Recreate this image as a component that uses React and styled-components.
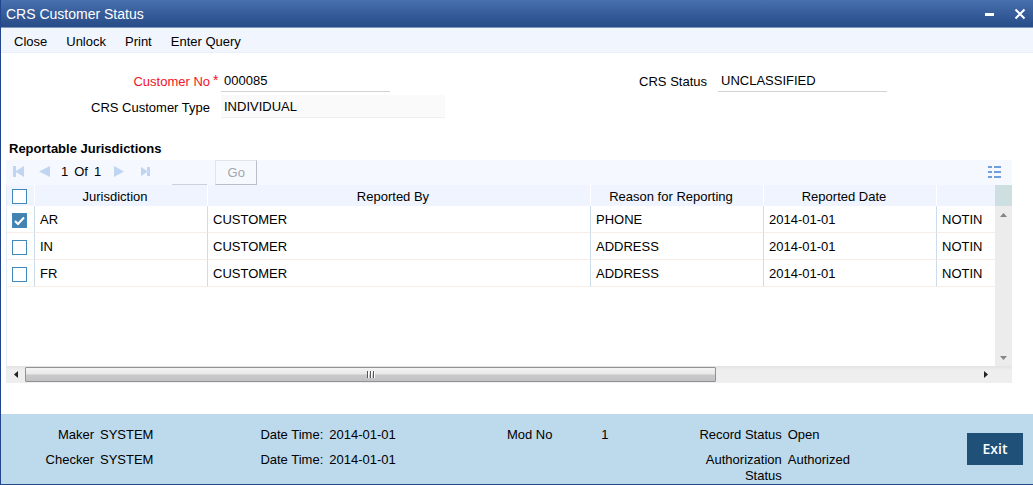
import React, { useState } from 'react';
import styled, { createGlobalStyle } from 'styled-components';

const GlobalStyle = createGlobalStyle`
    * {
        box-sizing: border-box;
    }

    body {
        margin: 0;
        background: #fff;
    }

    body, button, input {
        font-family: "Liberation Sans", Arial, sans-serif;
        font-size: 13px;
        line-height: 16px;
        color: #000;
    }
`;

const Window = styled.div`
    display: flex;
    flex-direction: column;
    min-height: 100vh;
    border-left: 1px solid #21448c;
    border-bottom: 1px solid #24488a;
`;

const TitleBar = styled.header`
    display: flex;
    align-items: center;
    justify-content: space-between;
    height: 28px;
    padding: 0 6px 0 5px;
    background: linear-gradient(#4870ae, #264b87);
    border-bottom: 1px solid #7c9ac0;
    color: #fff;
`;

const Title = styled.h1`
    margin: 0;
    font-size: 14px;
    font-weight: normal;
`;

const WindowButtons = styled.div`
    display: flex;
    gap: 16px;
`;

const IconButton = styled.button`
    display: flex;
    padding: 0;
    border: 0;
    background: none;
    color: inherit;
`;

const Menu = styled.nav`
    display: flex;
    align-items: center;
    gap: 19px;
    height: 25px;
    padding: 4px 13px 0;
    background: #f0f5fe;
    border-bottom: 1px solid #eaeff5;
`;

const MenuButton = styled.button`
    padding: 0;
    border: 0;
    background: none;
`;

const Main = styled.main`
    display: flex;
    flex-direction: column;
    flex: 1;
    padding-top: 16px;
`;

const Form = styled.form`
    display: grid;
    grid-template-columns: 1fr 1fr;
    row-gap: 3px;
    padding-right: 38px;
`;

const FormRow = styled.div`
    display: flex;
    align-items: center;
`;

const Label = styled.label`
    width: 209px;
    padding-top: 3px;
    text-align: right;
    color: ${props => props.$required ? '#f01428' : '#000'};
`;

const Mark = styled.span`
    width: 11px;
    padding: 0 0 2px 3px;
    color: #f01428;
    font-size: 14px;
`;

const TextInput = styled.input`
    width: ${props => props.$wide ? '224px' : '169px'};
    height: 23px;
    padding: 0 3px;
    border: 0;
    border-bottom: 1px solid ${props => props.$wide ? '#efefef' : '#d2d2d2'};
    background: ${props => props.$wide ? '#fafafa' : '#fff'};
    outline: 0;
`;

const Heading = styled.h2`
    margin: 23px 0 3px 8px;
    font-size: 13px;
    line-height: 16px;
`;

const Grid = styled.section`
    display: flex;
    flex-direction: column;
    flex: 1;
    margin: 0 21px 31px 5px;
`;

const Pager = styled.div`
    display: flex;
    align-items: center;
    height: 25px;
    padding: 0 10px 2px 7px;
    background: #f5f8fe;
`;

const PagerButton = styled.button`
    display: flex;
    margin-right: ${props => props.$space || 0}px;
    padding: 0;
    border: 0;
    background: none;
    color: #c0d5f2;
`;

const PageCount = styled.span`
    display: flex;
    gap: 6px;
    margin-right: 13px;
`;

const PageInput = styled.input`
    width: 35px;
    height: 25px;
    margin: 2px 8px 0 19px;
    padding: 0 3px;
    border: 0;
    border-bottom: 1px solid #cdd0d6;
    background: none;
`;

const GoButton = styled.button`
    align-self: flex-start;
    flex-shrink: 0;
    width: 42px;
    height: 25px;
    margin-right: auto;
    padding: 0;
    border: 1px solid #e2e5ec;
    border-right-color: #b9bec8;
    border-bottom-color: #b9bec8;
    background: #f6f9fe;
    color: #a3a6ad;
`;

const Body = styled.div`
    display: flex;
    flex: 1;
`;

const Pane = styled.div`
    flex: 1;
    min-width: 0;
    min-height: 160px;
    border-left: 1px solid #e4edf8;
`;

const Table = styled.table`
    width: 100%;
    table-layout: fixed;
    border-collapse: separate;
    border-spacing: 0;
`;

const Col = styled.col`
    width: ${props => props.$width ? `${props.$width}px` : 'auto'};
`;

const Th = styled.th`
    height: 21px;
    padding: ${props => props.$check ? '2px 0 0 5px' : '2px 12px 0 0'};
    overflow: hidden;
    border-right: ${props => props.$last ? 0 : '1px solid #fff'};
    background: #eff4fe;
    font-weight: normal;
    line-height: 16px;
    white-space: nowrap;
`;

const Td = styled.td`
    height: 27px;
    padding: 1px 0 0 5px;
    overflow: hidden;
    border-right: ${props => props.$last ? 0 : '1px solid #cbdcea'};
    border-bottom: 1px solid #f8ece4;
    white-space: nowrap;
`;

const Check = styled.input`
    appearance: none;
    display: block;
    width: 15px;
    height: 15px;
    margin: ${props => props.$row ? '2px 0 0' : '0'};
    border: 1px solid #4289bb;
    background: #fff;

    &:checked {
        background: #4682b0 url("data:image/svg+xml,%3Csvg xmlns='http://www.w3.org/2000/svg' viewBox='0 0 13 13'%3E%3Cpath d='M2 7l3 3L11 3.500' fill='none' stroke='white' stroke-width='2'/%3E%3C/svg%3E") center / 13px no-repeat;
    }
`;

const VerticalBar = styled.div`
    display: flex;
    flex-direction: column;
    align-items: center;
    width: 17px;
    padding-bottom: 6px;
    background: #ececec;
    color: #858585;
`;

const BarCap = styled.div`
    width: 100%;
    height: 21px;
    margin-bottom: 7px;
    background: #cddfe1;
`;

const Spacer = styled.div`
    flex: 1;
`;

const HorizontalBar = styled.div`
    display: flex;
    align-items: center;
    height: 17px;
    padding-right: 17px;
    background: linear-gradient(#e2e2e2, #eee 4px, #eee);
    color: #222;
`;

const BarButton = styled.button`
    display: flex;
    align-items: center;
    justify-content: center;
    width: 19px;
    padding: 0;
    border: 0;
    background: none;
    color: inherit;
`;

const Track = styled.div`
    flex: 1;
`;

const Thumb = styled.div`
    display: flex;
    align-items: center;
    justify-content: center;
    width: calc(73% - 3px);
    height: 15px;
    border: 1px solid #929292;
    border-radius: 1px;
    background: linear-gradient(#f4f4f4, #e8e8e9 45%, #c9c9cb 55%, #c2c2c5);
`;

const Footer = styled.footer`
    display: flex;
    align-items: flex-start;
    height: 70px;
    padding: 13px 10px 0 0;
    background: #bdd9ec;
`;

const Audit = styled.dl`
    display: grid;
    grid-template-columns: repeat(4, 1fr);
    row-gap: 9px;
    flex: 1;
    margin: 0 49px 0 0;
`;

const AuditItem = styled.div`
    display: flex;
`;

const Term = styled.dt`
    width: 93px;
    text-align: right;
`;

const Value = styled.dd`
    min-width: ${props => props.$number ? '50px' : '0'};
    margin: 0 0 0 6px;
    text-align: ${props => props.$number ? 'right' : 'left'};
`;

const ExitButton = styled.button`
    width: 56px;
    height: 32px;
    margin-top: 6px;
    padding: 0;
    border: 0;
    background: #1e5078;
    color: #fff;
    font-family: "Open Sans", "Liberation Sans", sans-serif;
    font-size: 14px;
    font-weight: 600;
`;

const columns = [
    { name: 'Jurisdiction', width: 173 },
    { name: 'Reported By' },
    { name: 'Reason for Reporting', width: 173 },
    { name: 'Reported Date', width: 173 },
    { name: '', width: 58 },
];

const initialRows = [
    { checked: true, cells: ['AR', 'CUSTOMER', 'PHONE', '2014-01-01', 'NOTIN'] },
    { checked: false, cells: ['IN', 'CUSTOMER', 'ADDRESS', '2014-01-01', 'NOTIN'] },
    { checked: false, cells: ['FR', 'CUSTOMER', 'ADDRESS', '2014-01-01', 'NOTIN'] },
];

const audit = [
    { term: 'Maker', value: 'SYSTEM' },
    { term: 'Date Time:', value: '2014-01-01' },
    { term: 'Mod No', value: '1', number: true },
    { term: 'Record Status', value: 'Open' },
    { term: 'Checker', value: 'SYSTEM' },
    { term: 'Date Time:', value: '2014-01-01' },
    null,
    { term: 'Authorization Status', value: 'Authorized' },
];

const Shape = ({ d, width, height }) => (
    <svg width={width} height={height} viewBox={`0 0 ${width} ${height}`} fill="currentColor" aria-hidden="true">
        <path d={d} />
    </svg>
);

const Field = ({ id, label, value, required, wide }) => (
    <FormRow>
        <Label htmlFor={id} $required={required}>{label}</Label>
        <Mark>{required && '*'}</Mark>
        <TextInput id={id} defaultValue={value} $wide={wide} readOnly={wide} />
    </FormRow>
);

const JurisdictionTable = () => {
    const [rows, setRows] = useState(initialRows);
    const allChecked = rows.every(row => row.checked);

    const toggle = index => setRows(rows.map((row, i) => (
        i === index ? { ...row, checked: !row.checked } : row
    )));

    return (
        <Table>
            <colgroup>
                <Col $width={28} />
                {columns.map((column, i) => <Col key={i} $width={column.width} />)}
            </colgroup>
            <thead>
                <tr>
                    <Th $check>
                        <Check
                            type="checkbox"
                            aria-label="Select all"
                            checked={allChecked}
                            onChange={() => setRows(rows.map(row => ({ ...row, checked: !allChecked })))}
                        />
                    </Th>
                    {columns.map((column, i) => (
                        <Th key={i} $last={i === columns.length - 1}>{column.name}</Th>
                    ))}
                </tr>
            </thead>
            <tbody>
                {rows.map((row, index) => (
                    <tr key={row.cells[0]}>
                        <Td>
                            <Check
                                type="checkbox"
                                aria-label={`Select ${row.cells[0]}`}
                                checked={row.checked}
                                onChange={() => toggle(index)}
                                $row
                            />
                        </Td>
                        {row.cells.map((cell, i) => (
                            <Td key={i} $last={i === row.cells.length - 1}>{cell}</Td>
                        ))}
                    </tr>
                ))}
            </tbody>
        </Table>
    );
};

const App = () => (
    <Window>
        <GlobalStyle />
        <TitleBar>
            <Title>CRS Customer Status</Title>
            <WindowButtons>
                <IconButton aria-label="Minimize">
                    <Shape width={14} height={14} d="M2 6h9v3H2z" />
                </IconButton>
                <IconButton aria-label="Close window">
                    <svg width="14" height="14" viewBox="0 0 14 14" fill="none" stroke="currentColor" strokeWidth="2">
                        <path d="M2.500 2.500l9 9M11.500 2.500l-9 9" />
                    </svg>
                </IconButton>
            </WindowButtons>
        </TitleBar>
        <Menu>
            <MenuButton>Close</MenuButton>
            <MenuButton>Unlock</MenuButton>
            <MenuButton>Print</MenuButton>
            <MenuButton>Enter Query</MenuButton>
        </Menu>
        <Main>
            <Form>
                <Field id="customer-no" label="Customer No" value="000085" required />
                <Field id="crs-status" label="CRS Status" value="UNCLASSIFIED" />
                <Field id="customer-type" label="CRS Customer Type" value="INDIVIDUAL" wide />
            </Form>
            <Heading>Reportable Jurisdictions</Heading>
            <Grid>
                <Pager>
                    <PagerButton aria-label="First page" $space={15}>
                        <Shape width={11} height={11} d="M0 0h3v11H0zM11 0v11L2 5.500z" />
                    </PagerButton>
                    <PagerButton aria-label="Previous page" $space={11}>
                        <Shape width={11} height={11} d="M11 0v11L0 5.500z" />
                    </PagerButton>
                    <PageCount>
                        <span>1</span>
                        <span>Of</span>
                        <span>1</span>
                    </PageCount>
                    <PagerButton aria-label="Next page" $space={17}>
                        <Shape width={10} height={11} d="M0 0v11l10-5.500z" />
                    </PagerButton>
                    <PagerButton aria-label="Last page" $space={3}>
                        <Shape width={9} height={9} d="M0 0v9l7-4.500zM6 0h3v9H6z" />
                    </PagerButton>
                    <PageInput aria-label="Page number" />
                    <GoButton>Go</GoButton>
                    <IconButton aria-label="Choose columns">
                        <svg width="14" height="13" viewBox="0 0 14 13" fill="#6f9fdc" aria-hidden="true">
                            <path d="M0 1h4v2H0zM6 1h7v2H6zM0 6h4v2H0zM6 6h7v2H6zM0 11h4v2H0zM6 11h7v2H6z" />
                        </svg>
                    </IconButton>
                </Pager>
                <Body>
                    <Pane>
                        <JurisdictionTable />
                    </Pane>
                    <VerticalBar>
                        <BarCap />
                        <Shape width={7} height={4} d="M0 4h7L3.500 0z" />
                        <Spacer />
                        <Shape width={7} height={4} d="M0 0h7L3.500 4z" />
                    </VerticalBar>
                </Body>
                <HorizontalBar>
                    <BarButton aria-label="Scroll left">
                        <Shape width={4} height={7} d="M4 0v7L0 3.500z" />
                    </BarButton>
                    <Track>
                        <Thumb>
                            <svg width="8" height="7" viewBox="0 0 8 7" fill="#555" aria-hidden="true">
                                <path d="M0 0h1v7H0zM3 0h1v7H3zM6 0h1v7H6z" />
                                <path fill="#fff" d="M1 0h1v7H1zM4 0h1v7H4zM7 0h1v7H7z" />
                            </svg>
                        </Thumb>
                    </Track>
                    <BarButton aria-label="Scroll right">
                        <Shape width={4} height={7} d="M0 0v7l4-3.500z" />
                    </BarButton>
                </HorizontalBar>
            </Grid>
        </Main>
        <Footer>
            <Audit>
                {audit.map((item, i) => (
                    <AuditItem key={i}>
                        {item && <Term>{item.term}</Term>}
                        {item && <Value $number={item.number}>{item.value}</Value>}
                    </AuditItem>
                ))}
            </Audit>
            <ExitButton>Exit</ExitButton>
        </Footer>
    </Window>
);

export default App;
